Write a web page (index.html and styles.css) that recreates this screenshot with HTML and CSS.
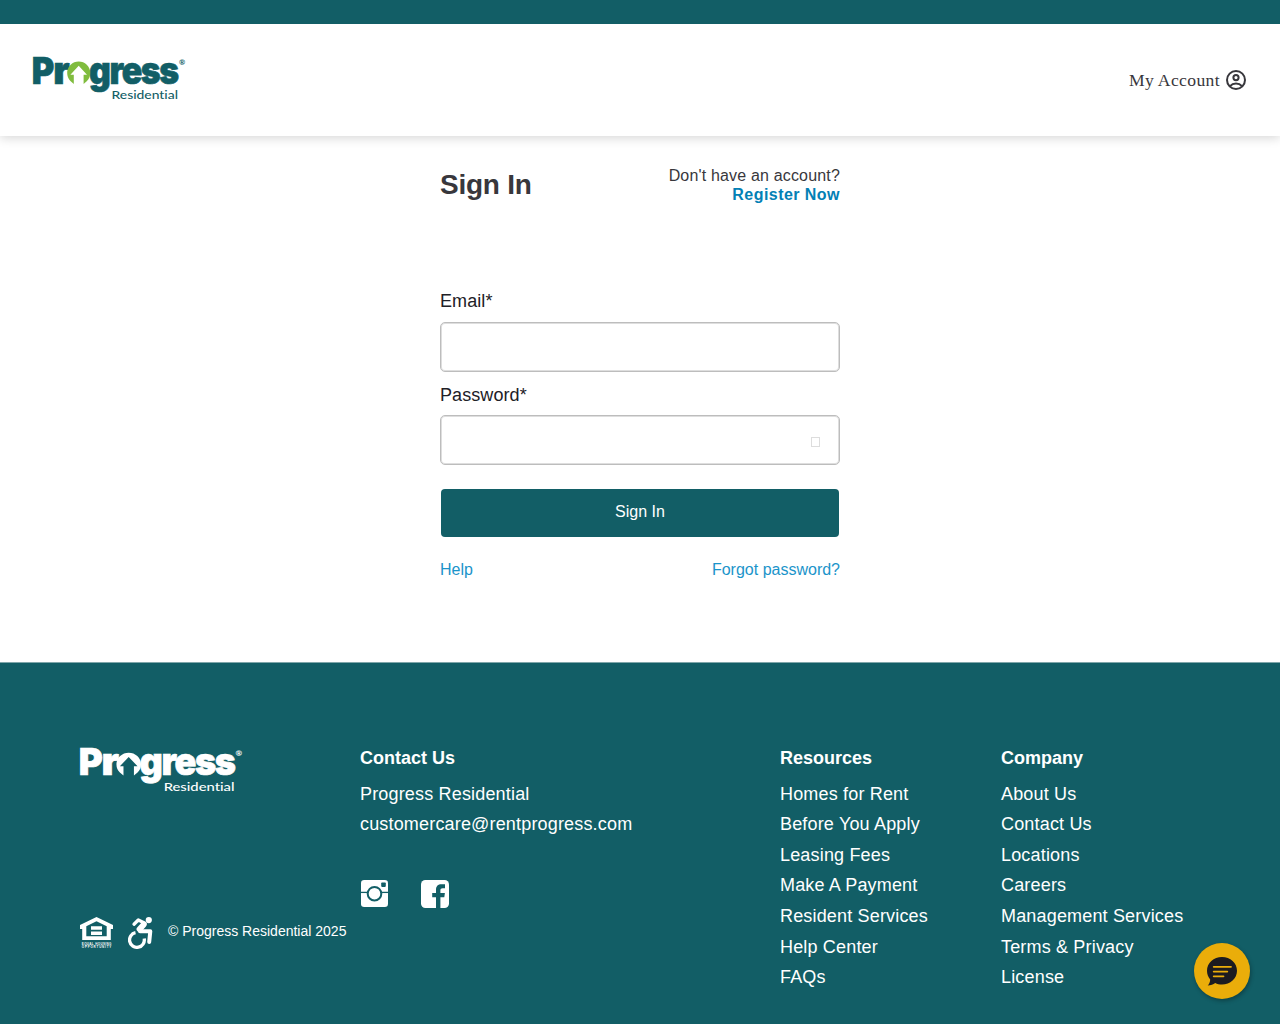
FILE: index.html
```html
<!DOCTYPE html>
<html lang="en">
<head>
<meta charset="utf-8">
<title>Sign In | Progress Residential</title>
<link rel="stylesheet" href="styles.css">
</head>
<body>
<div class="topbar"></div>
<header class="header">
  <svg class="logo" viewBox="0 0 152 44" role="img" aria-label="Progress Residential">
    <g class="logo-word">
      <text x="-1.200" y="26.800" font-size="36.500" textLength="22.500" lengthAdjust="spacingAndGlyphs">P</text>
      <text x="20.300" y="26.800" font-size="38" textLength="16.500" lengthAdjust="spacingAndGlyphs">r</text>
      <text class="logo-tail" x="55.900" y="26.800" font-size="38" textLength="89" lengthAdjust="spacingAndGlyphs">gress</text>
    </g>
    <path class="logo-house" d="M37.4 24A11.5 11.5 0 1 1 54 24L50.600 27V17.800H54L45.7 8.800L37.4 17.800H40.800V27Z"/>
    <text class="logo-sub" x="78.500" y="42.2" textLength="66.500" lengthAdjust="spacingAndGlyphs">Residential</text>
    <text class="logo-reg" x="146" y="7.500">®</text>
  </svg>
  <a class="account">My Account
    <svg class="account-icon" viewBox="0 0 20 20" fill="none" stroke="currentColor" stroke-width="2"><circle cx="10" cy="10" r="9"/><circle cx="10" cy="7.6" r="2.6"/><path d="M4 16.2C7.2 12.6 12.8 12.6 16 16.2"/></svg>
  </a>
</header>
<main class="main">
  <div class="intro">
    <h1>Sign In</h1>
    <div class="register">Don't have an account?<a>Register Now</a></div>
  </div>
  <form class="form">
    <label for="email">Email*</label>
    <input id="email" class="field" type="text">
    <label for="password">Password*</label>
    <div class="field password"><input id="password" type="password"><span class="reveal"></span></div>
    <button type="button">Sign In</button>
    <div class="links"><a>Help</a><a>Forgot password?</a></div>
  </form>
</main>
<footer class="footer">
  <div class="brand">
    <svg class="logo logo-light" viewBox="0 0 152 44" preserveAspectRatio="none" role="img" aria-label="Progress Residential">
      <g class="logo-word">
        <text x="-1.200" y="26.800" font-size="36.500" textLength="22.500" lengthAdjust="spacingAndGlyphs">P</text>
        <text x="20.300" y="26.800" font-size="38" textLength="16.500" lengthAdjust="spacingAndGlyphs">r</text>
        <text class="logo-tail" x="55.900" y="26.800" font-size="38" textLength="89" lengthAdjust="spacingAndGlyphs">gress</text>
      </g>
      <path class="logo-house" d="M37.4 24A11.5 11.5 0 1 1 54 24L50.600 27V17.800H54L45.7 8.800L37.4 17.800H40.800V27Z"/>
      <text class="logo-sub" x="78.500" y="41.700" textLength="66.500" lengthAdjust="spacingAndGlyphs">Residential</text>
      <text class="logo-reg" x="146" y="7.500">®</text>
    </svg>
    <div class="legal">
      <svg class="housing" viewBox="0 0 33 32" fill="#fff">
        <path fill-rule="evenodd" d="M16.5 0L33 8V12H30.8V23H2.2V12H0V8ZM16.5 4.3L6.3 9.3V19.3H26.7V9.3Z"/>
        <path d="M11 9.2h11v3.6H11zM11 14.4h11V18H11z"/>
        <text x="1.8" y="27.600" textLength="29.5">EQUAL HOUSING</text>
        <text x="1.8" y="31.2" textLength="29.5">OPPORTUNITY</text>
      </svg>
      <svg class="access" viewBox="0 0 26 32" fill="none" stroke="#fff" stroke-width="3.3" stroke-linecap="round" stroke-linejoin="round">
        <circle cx="20.800" cy="3.1" r="3.1" fill="#fff" stroke="none"/>
        <path d="M6 7.200L10.300 3L17 6.200"/>
        <path stroke-width="5.8" d="M15.800 7.500L11.500 12.200"/>
        <path stroke-width="4" d="M12 14.2H22.300L21.200 25"/>
        <path stroke-linecap="butt" d="M7.500 15.700A7.400 7.400 0 1 0 16.200 21.500"/>
      </svg>
      <span>© Progress Residential 2025</span>
    </div>
  </div>
  <div class="contact">
    <h2>Contact Us</h2>
    <ul><li>Progress Residential</li><li>customercare@rentprogress.com</li></ul>
    <div class="social">
      <svg class="instagram" viewBox="0 0 27 27"><rect width="27" height="27" rx="3.2" fill="#fff"/><path d="M0 12.4h27" stroke="#125e66" stroke-width="1.3"/><circle cx="13.5" cy="13.7" r="6.8" fill="#fff" stroke="#125e66" stroke-width="2"/><rect x="20.2" y="2.5" width="4.6" height="4.4" rx=".8" fill="#125e66"/></svg>
      <svg class="facebook" viewBox="0 0 28 28"><rect width="28" height="28" rx="4.4" fill="#fff"/><path fill="#125e66" d="M15 28V17.3H11.2V12.9H15V9.7C15 6 17.1 4.2 20.4 4.2H24V8.2H21.7C20 8.2 19.4 9 19.4 10.4V12.9H23.9L23.3 17.3H19.4V28Z"/></svg>
    </div>
  </div>
  <nav class="resources">
    <h2>Resources</h2>
    <ul><li>Homes for Rent</li><li>Before You Apply</li><li>Leasing Fees</li><li>Make A Payment</li><li>Resident Services</li><li>Help Center</li><li>FAQs</li></ul>
  </nav>
  <nav>
    <h2>Company</h2>
    <ul><li>About Us</li><li>Contact Us</li><li>Locations</li><li>Careers</li><li>Management Services</li><li>Terms &amp; Privacy</li><li>License</li></ul>
  </nav>
</footer>
<div class="chat">
  <svg viewBox="0 0 30 29"><path fill="#1c1b20" d="M15 0C23.3 0 30 6 30 13.8S23.3 27.6 15 27.6C12.5 27.6 10.2 27 8.2 26C6.300 27.500 3.800 28.300 .8 28.500C2.300 26.800 3.100 24.800 3.200 22.500C1.200 20.100 0 17.100 0 13.800C0 6 6.700 0 15 0Z"/><path stroke="#eaad0a" stroke-width="1.8" stroke-linecap="round" d="M6.700 9.800H24M6.700 14.600H20.300M6.700 19.300H16.500"/></svg>
</div>
</body>
</html>
```
FILE: styles.css
```css
* { box-sizing: border-box; }
body {
  margin: 0;
  height: 1024px;
  overflow: hidden;
  background: #fff;
  color: #38373c;
  font-family: "Liberation Sans", Arial, sans-serif;
  font-size: 16px;
}
.topbar { height: 24px; background: #125e66; }
.header {
  height: 112px;
  padding: 0 34px 0 33px;
  display: flex;
  justify-content: space-between;
  align-items: center;
  box-shadow: 0 2px 10px rgba(0, 0, 0, .16);
  clip-path: inset(0 0 -20px 0);
}
.logo { width: 152px; height: 44px; margin-top: -2px; overflow: visible; flex: none; }
.logo text { fill: #125e66; }
.logo-word { font-family: Inter, sans-serif; font-weight: 900; }
.logo-word text { stroke: #125e66; stroke-width: .7px; }
.logo-tail { letter-spacing: -1.5px; }
.logo-sub { font-family: Lato, sans-serif; font-size: 12px; font-weight: 500; font-variant-ligatures: none; }
.logo-reg { font-family: Lato, sans-serif; font-size: 7.5px; font-weight: 700; }
.logo-house { fill: #80bc3e; }
.logo-light { width: 162px; height: 45px; margin: 0; }
.logo-light text, .logo-light .logo-house { fill: #fff; }
.logo-light .logo-word text { stroke: #fff; }
.account {
  display: flex;
  align-items: center;
  gap: 6px;
  font-family: "Liberation Serif", serif;
  font-size: 17.6px;
  letter-spacing: .36px;
}
.account-icon { width: 20px; height: 20px; }
.main { width: 400px; height: 526px; margin: 0 auto; padding-top: 30px; }
.intro { height: 124px; display: flex; justify-content: space-between; }
h1 { margin: 3px 0 0; font-size: 28px; line-height: 32px; letter-spacing: -.25px; }
.register { text-align: right; line-height: 19px; letter-spacing: .17px; }
.register a { display: block; color: #0380b5; font-weight: 700; letter-spacing: .45px; }
.form { display: flex; flex-direction: column; }
label { height: 32px; font-size: 18px; line-height: 22px; letter-spacing: .08px; color: #212026; }
.field {
  width: 100%;
  height: 50px;
  margin-bottom: 12px;
  border: 1px solid #bdbdbd;
  border-radius: 5px;
  background: #fff;
  box-shadow: inset 0 0 0 1px #dedede;
}
label + .password { margin-top: -1px; margin-bottom: 24px; }
.password { display: flex; align-items: center; padding: 0 19px 0 2px; }
.password input { flex: 1; min-width: 0; height: 40px; border: 0; }
.reveal { width: 9px; height: 10px; margin-top: 4px; border: 1px solid #ddd; }
button {
  height: 48px;
  margin: 0 1px;
  padding: 0 0 2px;
  border: 0;
  border-radius: 4px;
  background: #125e66;
  color: #fff;
  font: inherit;
}
.links { margin-top: 23px; display: flex; justify-content: space-between; line-height: 20px; color: #1b94ca; }
.footer {
  height: 362px;
  padding: 85px 80px 0;
  display: grid;
  grid-template-columns: 280px 420px 221px auto;
  border-top: 1px solid #7fa6aa;
  background: #125e66;
  color: #fff;
  font-size: 18px;
}
.brand { height: 201px; display: flex; flex-direction: column; justify-content: space-between; }
.legal { display: flex; align-items: center; white-space: nowrap; font-size: 14px; line-height: 32px; }
.legal span { margin-top: -4px; }
.housing { width: 33px; height: 32px; margin-right: 15px; }
.housing text { font: 700 3px "Liberation Sans", sans-serif; }
.access { width: 26px; height: 32px; margin-right: 14px; }
h2 { margin: 0 0 9.6px; font-size: 18px; line-height: 21px; }
ul { margin: 0; padding: 0; list-style: none; letter-spacing: .17px; line-height: 30.6px; }
.social { display: flex; gap: 33px; padding-top: 40.2px; margin-left: 1px; }
.instagram { width: 27px; height: 27px; }
.facebook { width: 28px; height: 28px; }
.chat {
  position: absolute;
  left: 1194px;
  top: 943px;
  width: 56px;
  height: 56px;
  display: flex;
  align-items: center;
  justify-content: center;
  border-radius: 50%;
  background: #eaad0a;
  box-shadow: 1px 2px 4px rgba(0, 0, 0, .3);
}
.chat svg { width: 30px; height: 29px; }
```
